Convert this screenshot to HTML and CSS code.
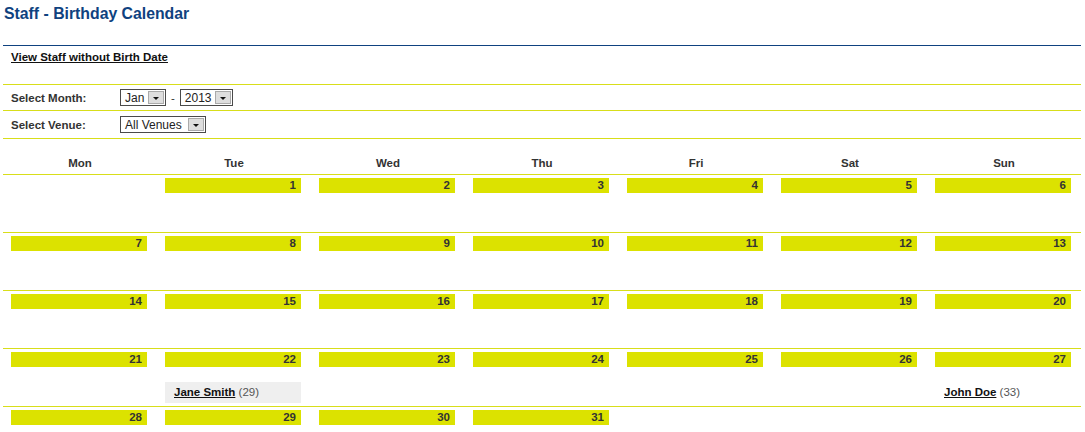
FILE: index.html
```html
<!DOCTYPE html>
<html lang="en">
<head>
  <meta charset="UTF-8">
  <title>Staff - Birthday Calendar</title>
  <link rel="stylesheet" href="styles.css">
</head>
<body>

<div class="page">
  <!-- Header -->
  <h1>Staff - Birthday Calendar</h1>

  <div class="links">
    <a href="#">View Staff without Birth Date</a>
  </div>

  <!-- Filters -->
  <div class="filter-row month-row">
    <span class="filter-label">Select Month:</span>
    <span class="dropdown dd-month"><span class="dd-text">Jan</span><span class="dd-arrow"></span></span>
    <span class="dash">-</span>
    <span class="dropdown dd-year"><span class="dd-text">2013</span><span class="dd-arrow"></span></span>
  </div>
  <div class="filter-row venue-row">
    <span class="filter-label">Select Venue:</span>
    <span class="dropdown dd-venue"><span class="dd-text">All Venues</span><span class="dd-arrow"></span></span>
  </div>

  <!-- Calendar -->
  <div class="calendar">
    <div class="week head">
      <div class="dayname">Mon</div>
      <div class="dayname">Tue</div>
      <div class="dayname">Wed</div>
      <div class="dayname">Thu</div>
      <div class="dayname">Fri</div>
      <div class="dayname">Sat</div>
      <div class="dayname">Sun</div>
    </div>

    <div class="week">
      <div class="day empty"></div>
      <div class="day"><div class="num">1</div></div>
      <div class="day"><div class="num">2</div></div>
      <div class="day"><div class="num">3</div></div>
      <div class="day"><div class="num">4</div></div>
      <div class="day"><div class="num">5</div></div>
      <div class="day"><div class="num">6</div></div>
    </div>

    <div class="week">
      <div class="day"><div class="num">7</div></div>
      <div class="day"><div class="num">8</div></div>
      <div class="day"><div class="num">9</div></div>
      <div class="day"><div class="num">10</div></div>
      <div class="day"><div class="num">11</div></div>
      <div class="day"><div class="num">12</div></div>
      <div class="day"><div class="num">13</div></div>
    </div>

    <div class="week">
      <div class="day"><div class="num">14</div></div>
      <div class="day"><div class="num">15</div></div>
      <div class="day"><div class="num">16</div></div>
      <div class="day"><div class="num">17</div></div>
      <div class="day"><div class="num">18</div></div>
      <div class="day"><div class="num">19</div></div>
      <div class="day"><div class="num">20</div></div>
    </div>

    <div class="week">
      <div class="day"><div class="num">21</div></div>
      <div class="day">
        <div class="num">22</div>
        <div class="bday shaded"><a href="#">Jane Smith</a> <span class="age">(29)</span></div>
      </div>
      <div class="day"><div class="num">23</div></div>
      <div class="day"><div class="num">24</div></div>
      <div class="day"><div class="num">25</div></div>
      <div class="day"><div class="num">26</div></div>
      <div class="day">
        <div class="num">27</div>
        <div class="bday"><a href="#">John Doe</a> <span class="age">(33)</span></div>
      </div>
    </div>

    <div class="week">
      <div class="day"><div class="num">28</div></div>
      <div class="day"><div class="num">29</div></div>
      <div class="day"><div class="num">30</div></div>
      <div class="day"><div class="num">31</div></div>
      <div class="day empty"></div>
      <div class="day empty"></div>
      <div class="day empty"></div>
    </div>
  </div>
</div>

</body>
</html>
```

FILE: styles.css
```css
/* Basic Styles */
body {
  font-family: "Liberation Sans", Arial, sans-serif;
  font-size: 11.5px;
  margin: 0;
  padding: 0;
  background-color: #fff;
  color: #333;
}
.page {
  margin: 0 4px 0 3px;
}
h1 {
  font-size: 15.8px;
  color: #0f4280;
  margin: 0;
  padding: 5px 0 0 1px;
  height: 40px;
  border-bottom: 1px solid #0f4280;
}
a {
  color: #111;
  font-weight: bold;
}

/* Links */
.links {
  height: 39px;
  padding: 5px 0 0 8px;
  box-sizing: border-box;
  border-bottom: 1px solid #d8de1a;
}

/* Filters */
.filter-row {
  display: flex;
  align-items: center;
  padding: 0 0 0 8px;
  border-bottom: 1px solid #d8de1a;
}
.month-row {
  height: 25px;
}
.venue-row {
  height: 27px;
}
.filter-label {
  width: 109px;
  font-weight: bold;
}
.dash {
  margin: 0 5px 0 5px;
}
.dropdown {
  display: inline-flex;
  align-items: center;
  justify-content: space-between;
  height: 17px;
  box-sizing: border-box;
  border: 1px solid #4a4a4a;
  background: #fff;
  font-size: 12px;
  color: #222;
  padding: 0 1px 0 4px;
}
.dd-month { width: 46px; }
.dd-year { width: 53px; }
.dd-venue { width: 86px; }
.dd-arrow {
  position: relative;
  width: 16px;
  height: 13px;
  background: #dedede;
  border: 1px solid #aaa;
  box-sizing: border-box;
}
.dd-arrow::after {
  content: "";
  position: absolute;
  left: 4px;
  top: 5px;
  border-left: 3.5px solid transparent;
  border-right: 3.5px solid transparent;
  border-top: 3.5px solid #111;
}

/* Calendar */
.week {
  display: grid;
  grid-template-columns: repeat(7, 154px);
  border-bottom: 1px solid #d8de1a;
}
.week:last-child {
  border-bottom: none;
}
.head {
  height: 36px;
  box-sizing: border-box;
  padding-top: 18px;
}
.dayname {
  text-align: center;
  font-weight: bold;
  line-height: 13px;
}
.day {
  height: 57px;
  padding: 3px 10px 0 8px;
  box-sizing: border-box;
}
.num {
  height: 15px;
  line-height: 15px;
  background-color: #dce200;
  text-align: right;
  font-weight: bold;
  padding-right: 5px;
}
.bday {
  margin-top: 15px;
  height: 21px;
  line-height: 21px;
  padding-left: 9px;
}
.bday.shaded {
  background-color: #efefef;
}
.age {
  color: #555;
}
```
